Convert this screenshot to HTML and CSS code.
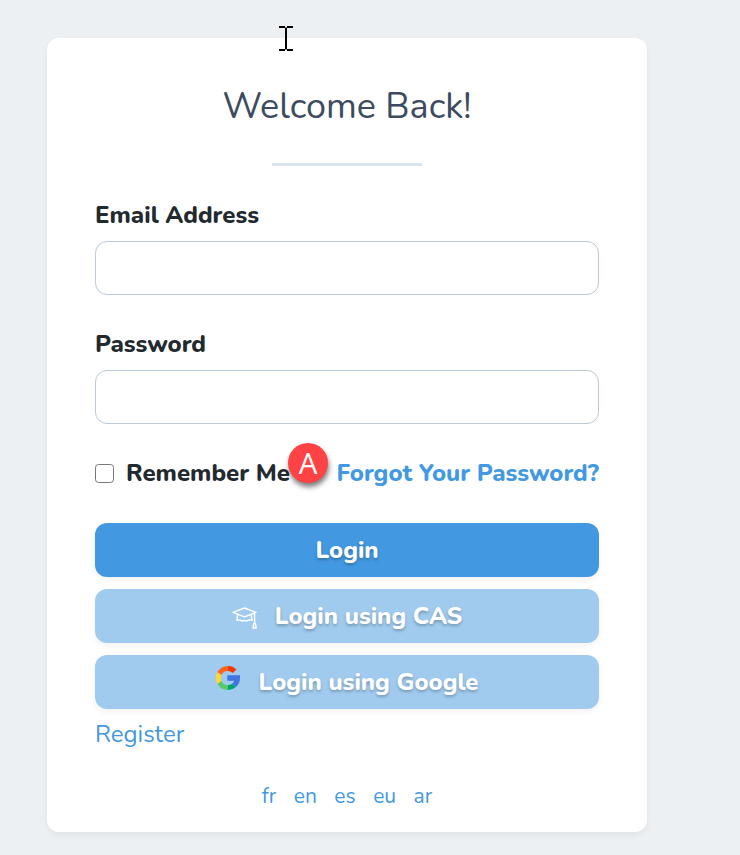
FILE: index.html
```html
<!DOCTYPE html>
<html lang="en">
<head>
<meta charset="utf-8">
<title>Welcome Back!</title>
<link rel="stylesheet" href="styles.css">
</head>
<body>
<main class="card">
  <h1 class="title"><span>Welcome Back!</span></h1>
  <div class="divider"></div>
  <form class="form">
    <div class="field">
      <label class="label label-email" for="email"><span>Email Address</span></label>
      <input class="input" id="email" type="email">
    </div>
    <div class="field">
      <label class="label label-password" for="password"><span>Password</span></label>
      <input class="input" id="password" type="password">
    </div>
    <div class="options">
      <label class="remember"><input class="check" type="checkbox"><span>Remember Me</span></label>
      <a class="forgot"><span>Forgot Your Password?</span></a>
      <div class="marker">A</div>
    </div>
    <div class="buttons">
      <button class="btn btn-login" type="button"><span>Login</span></button>
      <button class="btn btn-soft btn-cas" type="button">
        <svg class="icon cap" viewBox="0 0 26 22" fill="none" stroke="#fff" stroke-width="1.4" stroke-linejoin="round">
          <path d="M1 5.4 12.5 1 24 5.4 12.5 9.8Z"/>
          <path d="M5.8 7.4 4.9 13.4 8.2 12.9 10.2 14.2 12.5 13.4 14.8 14.2 16.8 12.9 20 13.4 19.1 7.4"/>
          <path d="M22.6 6.2V16.4M21.7 16.8h1.8l.7 4.2h-3.2Z"/>
        </svg>
        <span>Login using CAS</span>
      </button>
      <button class="btn btn-soft btn-google" type="button">
        <svg class="icon google" viewBox="0 0 24 24">
          <path fill="#ffda2d" d="M5.4 9A7 7 0 0 0 5.4 15L1.5 18A12 12 0 0 1 1.5 6Z"/>
          <path fill="#ff641a" d="M1.5 6A12 12 0 0 1 12 0V5A7 7 0 0 0 5.4 9Z"/>
          <path fill="#f03800" d="M12 0A12 12 0 0 1 20.4 3.4L16.8 7A7 7 0 0 0 12 5Z"/>
          <path fill="#59c96a" d="M1.5 18 5.4 15A7 7 0 0 0 12 19V24A12 12 0 0 1 1.5 18Z"/>
          <path fill="#00a66c" d="M12 24V19A7 7 0 0 0 16 17.8L20 20.9A12 12 0 0 1 12 24Z"/>
          <path fill="#4175df" d="M11.3 9.3H24V12A12 12 0 0 1 20 20.9L16 17.8A7 7 0 0 0 18.3 14.8H11.3Z"/>
        </svg>
        <span>Login using Google</span>
      </button>
    </div>
    <a class="register"><span>Register</span></a>
  </form>
  <nav class="langs"><a>fr</a><a>en</a><a>es</a><a>eu</a><a>ar</a></nav>
</main>
<svg class="cursor" viewBox="0 0 14 25" fill="none" stroke="#000" stroke-width="2"><path d="M0 1H6M8 1H14M7 1.5V23.5M0 24H6M8 24H14"/></svg>
</body>
</html>
```

FILE: styles.css
```css
* { box-sizing: border-box; }
body {
  margin: 0;
  min-height: 855px;
  padding: 38px 0 0 47px;
  background: #ecf0f3;
  color: #22292f;
  font-family: Nunito, Lato, "Open Sans", sans-serif;
  overflow: hidden;
}
.card {
  width: 600px;
  height: 794px;
  padding: 44px 48px 0;
  background: #fff;
  border-radius: 12px;
  box-shadow: 0 3px 6px rgba(0, 0, 0, .05);
}
.title {
  margin: 0;
  height: 50px;
  line-height: 50px;
  font-size: 36px;
  font-weight: 400;
  text-align: center;
  color: #3c4b5f;
}
.divider {
  width: 150px;
  height: 3px;
  margin: 31px auto 34px;
  background: #dae4ec;
}
.field { margin-bottom: 34px; }
.label {
  display: block;
  height: 41px;
  line-height: 30px;
  font-size: 24px;
  font-weight: 800;
}
.input {
  display: block;
  width: 100%;
  height: 54px;
  padding: 0 12px;
  border: 1px solid #bacad6;
  border-radius: 12px;
  background: #fff;
  outline: none;
}
.options {
  position: relative;
  display: flex;
  align-items: center;
  justify-content: space-between;
  height: 30px;
  font-size: 24px;
  font-weight: 800;
  white-space: nowrap;
}
.remember { display: flex; align-items: center; gap: 12px; }
.check {
  appearance: none;
  width: 19px;
  height: 19px;
  margin: 0;
  border: 1px solid #767676;
  border-radius: 3.5px;
  background: #fff;
}
.forgot, .register, .langs { color: #4299e1; }
.marker {
  position: absolute;
  left: 193px;
  top: -15px;
  width: 40px;
  height: 40px;
  border-radius: 50%;
  background: #ff4244;
  box-shadow: 1px 4px 5px rgba(0, 0, 0, .5);
  color: #fff;
  font: 400 29.5px/40px "Open Sans", sans-serif;
  text-align: center;
}
.buttons { display: grid; gap: 12px; margin-top: 35px; }
.btn {
  display: flex;
  align-items: center;
  justify-content: center;
  height: 54px;
  padding: 0;
  border: 0;
  border-radius: 12px;
  background: #4299e1;
  box-shadow: 0 3px 6px rgba(0, 0, 0, .05);
  color: #fff;
  font-family: inherit;
  font-size: 24px;
  font-weight: 800;
  text-shadow: 0 2px 3px rgba(0, 0, 0, .25);
}
.btn-soft { background: #a0cbee; }
.cap { width: 26px; height: 22px; margin: 4px 17px 0 0; }
.google { width: 24px; height: 24px; margin: -8px 18.7px 0 .3px; }
.register {
  display: block;
  height: 34px;
  margin-top: 8px;
  line-height: 34px;
  font-size: 24px;
}
.langs {
  display: flex;
  justify-content: center;
  gap: 17.5px;
  margin-top: 30px;
  line-height: 30px;
  font-size: 21px;
  font-weight: 400;
}
.cursor {
  position: absolute;
  left: 279px;
  top: 26px;
  width: 14px;
  height: 25px;
}
```
